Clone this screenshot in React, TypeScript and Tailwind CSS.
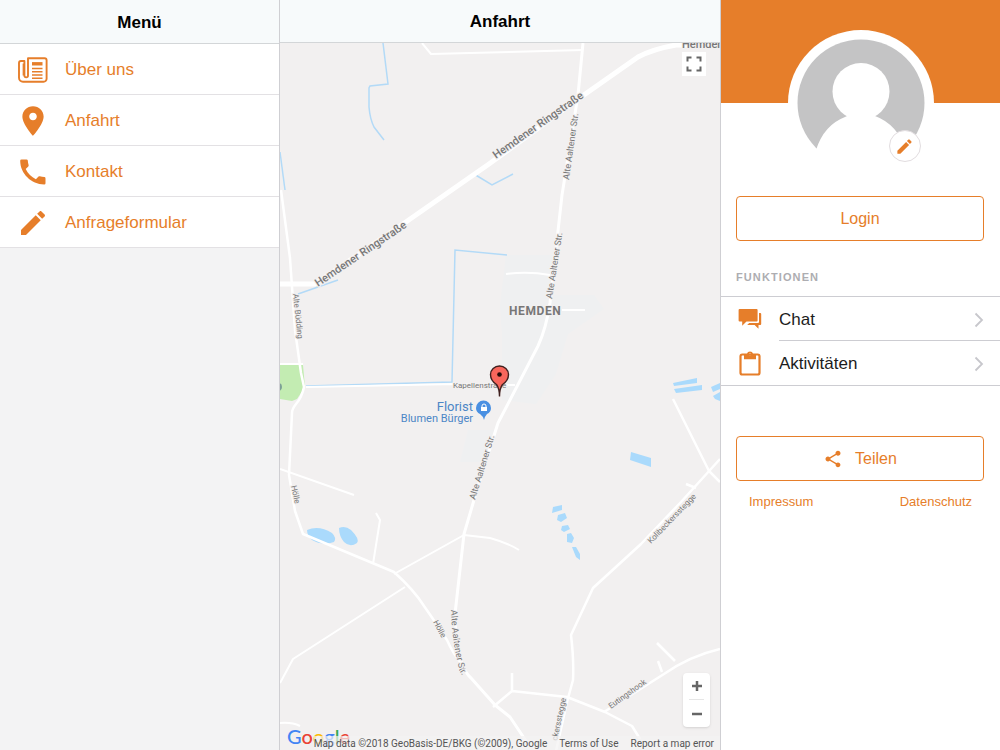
import { IoMdCreate, IoMdPin, IoMdShare } from "react-icons/io";

const NewspaperIcon = () => {
  return (
    <svg viewBox="0 0 30 26" className="h-[26px] w-[30px]" fill="none" stroke="currentColor">
      <path
        d="M10 1.200h16.600a2 2 0 0 1 2 2v18.600a3 3 0 0 1-3 3H5a4 4 0 0 1-4-4V6a2 2 0 0 1 2-2h3.400v14.600a1.800 1.800 0 0 0 3.600 0z"
        strokeWidth="1.900"
        strokeLinejoin="round"
      />
      <path d="M5.300 6.500v12" strokeWidth="1.300" />
      <path d="M14 6.800h10.500" strokeWidth="3.400" />
      <path d="M14 11.400h10.500M14 14.800h10.500M14 18h10.500M14 21.200h10.500" strokeWidth="1.500" />
    </svg>
  );
};

const PhoneIcon = () => {
  return (
    <svg viewBox="0 0 26 26" className="h-[26px] w-[26px]" fill="currentColor">
      <path d="M1.500.500h5a1.300 1.300 0 0 1 1.300 1.100c.1 1.500.3 3 .8 4.400a1.400 1.400 0 0 1-.3 1.400L5.700 10c2.200 4.400 5.700 7.900 10.200 10.200l2.600-2.600a1.400 1.400 0 0 1 1.400-.3c1.400.400 2.900.700 4.400.800a1.300 1.300 0 0 1 1.200 1.300v4.800a1.300 1.300 0 0 1-1.300 1.300C11.300 25.500.2 14.500.2 1.800A1.300 1.300 0 0 1 1.500.500z" />
    </svg>
  );
};

const ChatIcon = () => {
  return (
    <svg viewBox="0 0 24 22" className="h-[22px] w-6" fill="currentColor">
      <path d="M1.600 1h17a1 1 0 0 1 1 1v10.600a1 1 0 0 1-1 1H8.500L4.200 17.800V13.600H1.600a1 1 0 0 1-1-1V2a1 1 0 0 1 1-1z" />
      <path d="M21 5h1.200a1 1 0 0 1 1 1v10a1 1 0 0 1-1 1H20.500v3.800L16.600 17H9.200l2-2H20a1 1 0 0 0 1-1z" />
    </svg>
  );
};

const ClipboardIcon = () => {
  return (
    <svg viewBox="0 0 22 26" className="h-[26px] w-6">
      <rect x="1.500" y="4.500" width="19" height="20" rx="1.800" fill="none" stroke="currentColor" strokeWidth="2.200" />
      <path
        d="M5 4h2.900a3.200 3.200 0 0 1 6.200 0H17v5.300H5zM11 3.200a1.100 1.100 0 1 0 0 2.200 1.100 1.100 0 0 0 0-2.200z"
        fill="currentColor"
        fillRule="evenodd"
      />
    </svg>
  );
};

const Chevron = () => {
  return (
    <svg viewBox="0 0 10 16" className="h-4 w-[10px]" fill="none" stroke="#c7c7cc" strokeWidth="1.800">
      <path d="M1.500 1.500L8 8l-6.500 6.500" />
    </svg>
  );
};

const menu = [
  { label: "Über uns", icon: <NewspaperIcon /> },
  { label: "Anfahrt", icon: <IoMdPin size={34} /> },
  { label: "Kontakt", icon: <PhoneIcon /> },
  { label: "Anfrageformular", icon: <IoMdCreate size={32} /> },
];

const functions = [
  { label: "Chat", icon: <ChatIcon /> },
  { label: "Aktivitäten", icon: <ClipboardIcon /> },
];

const Menu = () => {
  return (
    <nav className="w-7/25 shrink-0 border-r border-[#cfcfd3] bg-[#f3f3f4]">
      <header className="flex h-11 items-center justify-center border-b border-[#d3d6d8] bg-[#f7fafb] pt-0.5">
        <h2 className="text-[17px] font-bold">Menü</h2>
      </header>
      <ul>
        {menu.map((item) => (
          <li key={item.label} className="border-b border-[#e3e1e4] bg-white">
            <a href="#" className="flex h-[50px] items-center pt-0.5 text-[17px] text-[#e67e2a]">
              <span className="flex w-[65px] justify-center">{item.icon}</span>
              {item.label}
            </a>
          </li>
        ))}
      </ul>
    </nav>
  );
};

const MapDrawing = () => {
  return (
    <svg
      viewBox="280 43 440 707"
      preserveAspectRatio="xMidYMid slice"
      className="absolute inset-0 h-full w-full font-[Roboto,sans-serif]"
    >
      <g fill="#eff0f1">
        <path d="M506 255h46l2 40h40l10 14-36 25-12 40-20 30-34-4V335l-2-30z" />
        <path d="M468 430h28l-10 32h-26z" />
      </g>

      <path d="M280 365h23l2 22-8 12-5 2-12-2z" fill="#c3ecb2" />
      <circle cx="278" cy="387" r="4" fill="#7da196" />

      <g fill="none" stroke="#b3daf7" strokeWidth="1.500">
        <path d="M383 43l5 41-18 2-1 2v19q1 12 5 20l10 13" />
        <path d="M280 152l5 38" />
        <path d="M474 174l18 11 21-11" />
        <path d="M298 294l40-14M306 386l146-4 3-132 52 5" />
      </g>

      <g fill="#aadafc">
        <path d="M307 530q12-5 25 3 5 5 2 9-12 4-22-2-5-5-5-10zM339 528q6-3 12 2 9 9 6 13-7 5-13-1-5-6-5-14z" />
        <path d="M631 452l20 6v9l-21-7zM673 383l24-5v5l-23 3zM674 389l28-4v5l-26 3zM711 387l9-4v6l-7 3zM713 396l7-4v9l-5-2z" />
        <path d="M553 507l9-2v5l-10 3zM558 515l7-2 2 5-6 4-4-2zM562 526l6-1 2 4-6 3-3-2zM567 534l4-1 3 5-2 5-5-1zM572 547l4 0 4 7v6l-4-3z" />
      </g>

      <g fill="none" stroke="#ffffff" strokeLinejoin="round">
        <path d="M280 284h35l88-60 86-60 92-67 57-40q15-8 38-12h44" strokeWidth="5" />
        <path
          d="M583 43l-5 52-16 100-12 108q-4 26-12 43l-40 77-19 60-15 51-9 80v8q3 45 16 56l24 27 15 12 16 24"
          strokeWidth="3"
        />
        <path
          d="M281 190l9 68 5 72 6 43 3 14q-2 10-8 17-4 5-4 9l-3 62 6 36 8 23 91 38q20 18 30 34 14 20 23 34 6 14 15 24"
          strokeWidth="2.500"
        />
        <path
          d="M422 43l9 11 152-4M506 274q22-3 44 1M562 310h23M280 364h23M306 387l150-3 59 1M280 469l74 26M373 564l7-44-4-7M394 574l70-39 26 3q18 5 29 12M405 587l-112 72-13 24M280 723q12-1 20 3"
          strokeWidth="2"
        />
        <path
          d="M673 399l36 72 11 11M686 484l10 4M720 459l-39 43-40 42-48 44-22 47q3 25 2 45l-6 22-11 49M493 707l19-16 55 6 38 15 27 14 8 13M512 691v-18M604 712l60-38q26-18 56-25M675 661l-18-18M662 672l-4-11"
          strokeWidth="2.500"
        />
      </g>

      <g fill="#777777" stroke="#f2f0f0" strokeWidth="2" paintOrder="stroke">
        <g fontSize="11" fontWeight="500">
          <text transform="translate(318 287) rotate(-34)">Hemdener Ringstraße</text>
          <text transform="translate(496 159) rotate(-35)">Hemdener Ringstraße</text>
          <text x="682" y="48">Hemdener</text>
        </g>
        <g fontSize="9">
          <text transform="translate(569 180) rotate(-82)">Alte Aaltener Str.</text>
          <text transform="translate(552 299) rotate(-81)">Alte Aaltener Str.</text>
          <text transform="translate(475 500) rotate(-73)">Alte Aaltener Str.</text>
          <text transform="translate(293 294) rotate(84)" fontSize="8">Alte Büdding</text>
          <text transform="translate(291 486) rotate(78)" fontSize="8">Hölle</text>
          <text transform="translate(433 622) rotate(62)" fontSize="8">Hölle</text>
          <text transform="translate(651 544) rotate(-46)" fontSize="8">Kolibeckersstegge</text>
          <text transform="translate(611 709) rotate(-36)" fontSize="8">Eutingshook</text>
          <text transform="translate(557 741) rotate(-78)" fontSize="8">ckersstegge</text>
          <text x="453" y="388" fontSize="8">Kapellenstraße</text>
          <path id="curve" d="M451 610q1 32 9 62l8 12" fill="none" stroke="none" />
          <text>
            <textPath href="#curve">Alte Aaltener Str.</textPath>
          </text>
        </g>
        <text x="509" y="315" fontSize="12" fontWeight="700" className="tracking-wider">
          HEMDEN
        </text>
      </g>

      <g fill="#4c86c6" stroke="#f2f0f0" strokeWidth="2" paintOrder="stroke" textAnchor="end">
        <text x="473" y="411" fontSize="13">Florist</text>
        <text x="473" y="422" fontSize="11">Blumen Bürger</text>
      </g>
      <path d="M484 420q-1-4-4-6-4-2-4-6a7.500 7.500 0 0 1 15 0q0 4-4 6-2 2-3 6z" fill="#4a90e2" />
      <path d="M481 407h6v4h-6z" fill="#ffffff" />
      <path d="M482 407v-1a2 2 0 0 1 4 0v1" fill="none" stroke="#ffffff" />

      <path
        d="M499.500 396.500q0-8-3-12-6-4-6-10a9 8.500 0 0 1 18 0q0 6-6 10-3 4-3 12z"
        fill="#f8665c"
        stroke="#40201e"
        strokeWidth="1.400"
      />
      <circle cx="499.500" cy="374.500" r="2.300" fill="#260b09" />
    </svg>
  );
};

const MapPanel = () => {
  return (
    <main className="flex min-w-0 flex-1 flex-col">
      <header className="flex h-[43px] items-center justify-center border-b border-[#d3d6d8] bg-[#f7fafb] pt-0.5">
        <h1 className="text-[17px] font-bold">Anfahrt</h1>
      </header>
      <div className="relative flex-1 overflow-hidden bg-[#f2f0f0] font-[Roboto,sans-serif]">
        <MapDrawing />
        <button aria-label="Fullscreen" className="absolute top-[9px] right-[14px] bg-white p-1 text-[#666666]">
          <svg viewBox="0 0 16 16" className="h-4 w-4" fill="none" stroke="currentColor" strokeWidth="2">
            <path d="M1.500 5.500v-4h4M10.500 1.500h4v4M14.500 10.500v4h-4M5.500 14.500h-4v-4" />
          </svg>
        </button>
        <div className="absolute right-[10px] bottom-[23px] flex w-[27px] flex-col rounded-sm bg-white px-1.5 shadow-sm">
          <button aria-label="Zoom in" className="flex h-[27px] items-center justify-center border-b border-[#e6e6e6]">
            <svg viewBox="0 0 12 12" className="h-3 w-3" stroke="#666666" strokeWidth="2.500">
              <path d="M6 1v10M1 6h10" />
            </svg>
          </button>
          <button aria-label="Zoom out" className="flex h-[27px] items-center justify-center">
            <svg viewBox="0 0 12 12" className="h-3 w-3" stroke="#666666" strokeWidth="2.500">
              <path d="M1 6h10" />
            </svg>
          </button>
        </div>
        <div className="absolute bottom-0.5 left-[7px] font-[Lato,sans-serif] text-xl leading-6 font-medium">
          <span className="text-[#4285f4]">G</span>
          <span className="text-[#ea4335]">o</span>
          <span className="text-[#fbbc05]">o</span>
          <span className="text-[#4285f4]">g</span>
          <span className="text-[#34a853]">l</span>
          <span className="text-[#ea4335]">e</span>
        </div>
        <div className="absolute right-0 bottom-0 flex h-[14px] items-center gap-3 bg-[#f4f2f2]/70 pr-1.5 text-[10px] whitespace-nowrap text-[#555555]">
          <span>Map data ©2018 GeoBasis-DE/BKG (©2009), Google</span>
          <a href="#">Terms of Use</a>
          <a href="#">Report a map error</a>
        </div>
      </div>
    </main>
  );
};

const Profile = () => {
  return (
    <aside className="w-7/25 shrink-0 border-l border-[#cfcfd3] bg-white">
      <div className="h-[103px] bg-[#e67e2a] pt-[30px]">
        <div className="relative mx-auto h-[146px] w-[146px] rounded-full bg-white">
          <svg viewBox="0 0 146 146" className="h-full w-full">
            <circle cx="73" cy="73" r="63.500" fill="#c4c4c5" />
            <circle cx="73" cy="61.500" r="28.500" fill="#ffffff" />
            <path d="M28 120q8-25 29-33l2-1-5-8h38l-5 8q22 8 31 34v26H28z" fill="#ffffff" />
            <path d="M0 120h28l8 26H0z" fill="#ffffff" />
          </svg>
          <button
            aria-label="Profilbild bearbeiten"
            className="absolute right-[13px] bottom-[14px] flex h-8 w-8 items-center justify-center rounded-full border border-[#e2dde0] bg-white text-[#e67e2a]"
          >
            <IoMdCreate size={19} />
          </button>
        </div>
      </div>

      <div className="mt-[93px] pr-4 pl-[15px]">
        <button className="h-[45px] w-full rounded border border-[#e67e2a] text-base text-[#e67e2a]">Login</button>
      </div>

      <h3 className="mt-7 px-[15px] text-[11px] leading-4 font-bold tracking-widest text-[#adadb1]">FUNKTIONEN</h3>
      <ul className="mt-[11px] border-y border-[#cdcdd2]">
        {functions.map((item, i) => (
          <li key={item.label}>
            <a href="#" className="flex items-center text-[17px] text-[#1c1c1c]">
              <span className="flex w-[58px] justify-center text-[#e67e2a]">{item.icon}</span>
              <span
                className={
                  i === 0
                    ? "flex h-11 flex-1 items-center justify-between border-b border-[#cdcdd2] pt-0.5 pr-4"
                    : "flex h-11 flex-1 items-center justify-between pt-0.5 pr-4"
                }
              >
                {item.label}
                <Chevron />
              </span>
            </a>
          </li>
        ))}
      </ul>

      <div className="mt-[50px] pr-4 pl-[15px]">
        <button className="flex h-[45px] w-full items-center justify-center gap-3 rounded border border-[#e67e2a] text-base text-[#e67e2a]">
          <IoMdShare size={20} />
          Teilen
        </button>
      </div>
      <div className="mt-[11px] flex justify-between px-7 text-[13px] leading-5 text-[#e67e2a]">
        <a href="#">Impressum</a>
        <a href="#">Datenschutz</a>
      </div>
    </aside>
  );
};

const App = () => {
  return (
    <div className="flex min-h-screen bg-white font-['Liberation_Sans',Arial,sans-serif] text-black">
      <Menu />
      <MapPanel />
      <Profile />
    </div>
  );
};

export default App;
